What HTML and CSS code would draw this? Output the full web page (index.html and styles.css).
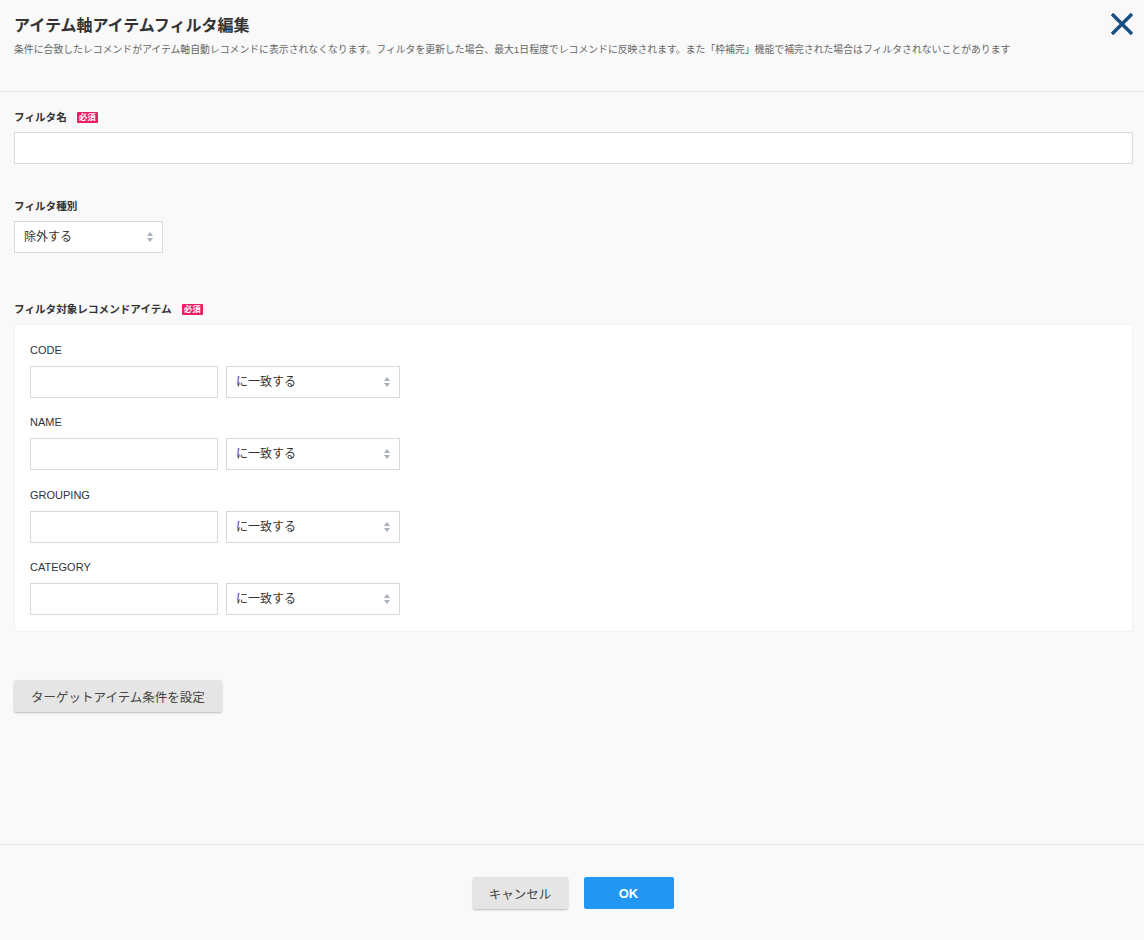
FILE: index.html
```html
<!DOCTYPE html>
<html lang="ja">
<head>
  <meta charset="UTF-8" />
  <meta name="viewport" content="width=device-width, initial-scale=1.0" />
  <title>アイテム軸アイテムフィルタ編集</title>
  <link rel="stylesheet" href="styles.css">
</head>
<body>
  <div class="dialog">
    <div class="header">
      <div class="heading">
        <h1>アイテム軸アイテムフィルタ編集</h1>
        <p class="desc">条件に合致したレコメンドがアイテム軸自動レコメンドに表示されなくなります。フィルタを更新した場合、最大1日程度でレコメンドに反映されます。また「枠補完」機能で補完された場合はフィルタされないことがあります</p>
      </div>
      <button class="close" aria-label="閉じる">
        <svg width="24" height="24" viewBox="0 0 24 24">
          <path d="M2 2 L22 22 M22 2 L2 22" stroke="#174f80" stroke-width="3.4" fill="none" />
        </svg>
      </button>
    </div>

    <div class="content">
      <div class="field first">
        <div class="label">フィルタ名<span class="badge">必須</span></div>
        <input class="text wide" type="text" />
      </div>

      <div class="field kind">
        <div class="label">フィルタ種別</div>
        <div class="select small">
          <span>除外する</span>
          <i class="arrows"></i>
        </div>
      </div>

      <div class="field target">
        <div class="label">フィルタ対象レコメンドアイテム<span class="badge">必須</span></div>
        <div class="panel">
          <div class="row">
            <div class="row-label">CODE</div>
            <div class="row-inputs">
              <input class="text item" type="text" />
              <div class="select match"><span>に一致する</span><i class="arrows"></i></div>
            </div>
          </div>
          <div class="row">
            <div class="row-label">NAME</div>
            <div class="row-inputs">
              <input class="text item" type="text" />
              <div class="select match"><span>に一致する</span><i class="arrows"></i></div>
            </div>
          </div>
          <div class="row">
            <div class="row-label">GROUPING</div>
            <div class="row-inputs">
              <input class="text item" type="text" />
              <div class="select match"><span>に一致する</span><i class="arrows"></i></div>
            </div>
          </div>
          <div class="row">
            <div class="row-label">CATEGORY</div>
            <div class="row-inputs">
              <input class="text item" type="text" />
              <div class="select match"><span>に一致する</span><i class="arrows"></i></div>
            </div>
          </div>
        </div>
      </div>

      <button class="btn grey target-btn">ターゲットアイテム条件を設定</button>
    </div>

    <div class="footer">
      <button class="btn grey cancel">キャンセル</button>
      <button class="btn blue ok">OK</button>
    </div>
  </div>
</body>
</html>
```

FILE: styles.css
```css
* {
  box-sizing: border-box;
}

body {
  margin: 0;
  background: #f9f9f9;
  color: #333;
  font-family: "Liberation Sans", "Noto Sans CJK JP", sans-serif;
}

.dialog {
  display: flex;
  flex-direction: column;
  height: 940px;
}

.header {
  display: flex;
  justify-content: space-between;
  align-items: flex-start;
  height: 92px;
  padding: 12px 10px 0 14px;
  border-bottom: 1px solid #e6e6e6;
}

h1 {
  margin: 2px 0 0;
  font-size: 16px;
  line-height: 24px;
  font-weight: bold;
  color: #333;
}

.desc {
  margin: 6px 0 0;
  font-size: 9.85px;
  line-height: 12px;
  color: #666;
}

.close {
  border: none;
  background: none;
  padding: 0;
  width: 24px;
  height: 24px;
  cursor: pointer;
}

.content {
  flex: 1;
  padding: 0 11px 0 14px;
}

.field.first {
  margin-top: 18px;
}
.field.kind {
  margin-top: 35px;
}
.field.target {
  margin-top: 49px;
}

.label {
  display: flex;
  align-items: center;
  font-size: 10.6px;
  line-height: 14px;
  font-weight: bold;
  color: #333;
  margin-bottom: 8px;
}

.badge {
  display: inline-block;
  margin-left: 10px;
  padding: 0 2px;
  height: 11px;
  line-height: 11px;
  font-size: 8.5px;
  font-weight: bold;
  color: #fff;
  background: #e91e63;
  border-radius: 1px;
}

.text {
  display: block;
  height: 32px;
  border: 1px solid #d9d9d9;
  background: #fff;
  font-size: 12px;
  padding: 0 10px;
  outline: none;
}
.text.wide {
  width: 100%;
}
.text.item {
  width: 188px;
}

.select {
  position: relative;
  display: flex;
  align-items: center;
  height: 32px;
  border: 1px solid #d9d9d9;
  background: #fff;
  font-size: 12px;
  padding: 0 9px 3px;
  color: #333;
}
.select.small {
  width: 149px;
}
.select.match {
  width: 174px;
  margin-left: 8px;
}

.arrows {
  position: absolute;
  right: 9px;
  top: 50%;
  width: 6px;
  height: 10px;
  margin-top: -5px;
}
.arrows::before,
.arrows::after {
  content: "";
  position: absolute;
  left: 0;
  border-left: 3px solid transparent;
  border-right: 3px solid transparent;
}
.arrows::before {
  top: 0;
  border-bottom: 4px solid #a8b0ba;
}
.arrows::after {
  bottom: 0;
  border-top: 4px solid #a8b0ba;
}

.panel {
  background: #fff;
  border: 1px solid #f3f3f3;
  padding: 18px 15px 16px;
}

.row + .row {
  margin-top: 17px;
}
.row:nth-child(3) {
  margin-top: 18px;
}

.row-label {
  font-size: 11px;
  line-height: 14px;
  color: #333;
  margin-bottom: 9px;
}

.row-inputs {
  display: flex;
}

.btn {
  border: none;
  border-radius: 2px;
  height: 32px;
  font-family: "Liberation Sans", "Noto Sans CJK JP", sans-serif;
  font-size: 12.5px;
  cursor: pointer;
}
.btn.grey {
  background: #e5e5e5;
  color: #444;
  box-shadow: 0 1px 2px rgba(0, 0, 0, 0.25);
}
.btn.blue {
  background: #2196f3;
  color: #fff;
  font-weight: bold;
  font-size: 13px;
}

.target-btn {
  margin-top: 48px;
  width: 208px;
}

.footer {
  display: flex;
  justify-content: center;
  gap: 16px;
  height: 96px;
  padding: 32px 0 0 2px;
  border-top: 1px solid #e6e6e6;
}
.cancel {
  width: 95px;
}
.ok {
  width: 90px;
}
```
